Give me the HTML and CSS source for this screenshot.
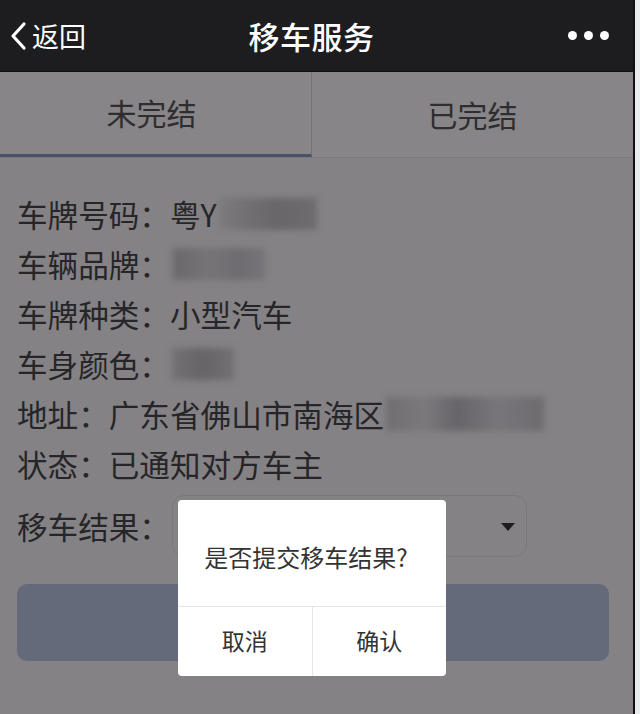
FILE: index.html
```html
<!DOCTYPE html>
<html lang="zh-CN">
<head>
    <meta charset="UTF-8">
    <meta name="viewport" content="width=device-width, initial-scale=1.0">
    <title>移车服务</title>
    <link rel="stylesheet" href="styles.css">
</head>
<body>

    <div class="screen">
        <div class="navbar">
            <div class="nav-back">
                <svg class="chevron" width="18" height="30" viewBox="0 0 18 30">
                    <polyline points="15,3 4,15 15,27" fill="none" stroke="#fff" stroke-width="3.2" stroke-linecap="round" stroke-linejoin="round"/>
                </svg>
                <span>返回</span>
            </div>
            <div class="nav-title">移车服务</div>
            <div class="nav-more">
                <span class="dot"></span>
                <span class="dot"></span>
                <span class="dot"></span>
            </div>
        </div>

        <div class="tabs">
            <div class="tab active">未完结</div>
            <div class="tab">已完结</div>
        </div>

        <div class="info">
            <div class="row">车牌号码：粤Y<span class="blur blur-plate"></span></div>
            <div class="row">车辆品牌：<span class="blur blur-brand"></span></div>
            <div class="row">车牌种类：小型汽车</div>
            <div class="row">车身颜色：<span class="blur blur-color"></span></div>
            <div class="row">地址：广东省佛山市南海区<span class="blur blur-addr"></span></div>
            <div class="row">状态：已通知对方车主</div>
            <div class="row row-select">
                <span>移车结果：</span>
                <div class="select-box">
                    <span class="caret"></span>
                </div>
            </div>
            <div class="submit-btn"></div>
        </div>

        <div class="dialog">
            <div class="dialog-msg">是否提交移车结果?</div>
            <div class="dialog-actions">
                <div class="dialog-btn">取消</div>
                <div class="dialog-btn">确认</div>
            </div>
        </div>
    </div>

</body>
</html>
```

FILE: styles.css
```css
body {
    margin: 0;
    padding: 0;
    background-color: #e9ebee;
    font-family: "Noto Sans CJK SC", "Noto Sans", sans-serif;
}

.screen {
    position: relative;
    width: 633px;
    height: 714px;
    background-color: #848285;
    border-right: 2px solid #101010;
    overflow: hidden;
}

/* top bar */
.navbar {
    height: 71px;
    background-color: #1d1c1e;
    border-bottom: 1px solid #111;
    display: flex;
    align-items: center;
    justify-content: space-between;
    color: #fff;
}

.nav-back {
    width: 140px;
    display: flex;
    align-items: center;
    gap: 5px;
    padding-left: 9px;
    box-sizing: border-box;
    font-size: 27px;
}

.nav-title {
    font-size: 31px;
    font-weight: 500;
    letter-spacing: 0.5px;
}

.nav-more {
    width: 150px;
    display: flex;
    justify-content: flex-end;
    gap: 7px;
    padding-right: 24px;
    box-sizing: border-box;
}

.dot {
    width: 9px;
    height: 9px;
    border-radius: 50%;
    background-color: #fff;
}

/* tabs */
.tabs {
    display: flex;
    height: 85px;
    background-color: #878587;
    border-bottom: 1px solid #7b797c;
}

.tab {
    flex: 1;
    display: flex;
    align-items: center;
    justify-content: center;
    font-size: 30px;
    color: #2e2d2f;
    padding-bottom: 2px;
    box-sizing: border-box;
}

.tab:first-child {
    flex: 0 0 312px;
    padding-right: 8px;
    border-right: 1px solid #747275;
}

.tab.active {
    border-bottom: 3px solid #4a5168;
}

/* details */
.info {
    padding: 31px 24px 0 17px;
    color: #262527;
    font-size: 30.6px;
}

.row {
    height: 50px;
    line-height: 50px;
    display: flex;
    align-items: center;
    white-space: nowrap;
}

.blur {
    display: inline-block;
    filter: blur(3px);
}

.blur-plate {
    width: 98px;
    height: 32px;
    margin-left: 2px;
    background: linear-gradient(90deg, #7d7b7e 0%, #716f72 30%, #686669 60%, #6e6c6f 100%);
}

.blur-brand {
    width: 92px;
    height: 32px;
    margin-left: 3px;
    background: linear-gradient(90deg, #6a686b 0%, #767477 40%, #6e6c70 70%, #767478 100%);
}

.blur-color {
    width: 62px;
    height: 32px;
    margin-left: 2px;
    background: linear-gradient(90deg, #737174 0%, #666467 50%, #727073 100%);
}

.blur-addr {
    width: 158px;
    height: 34px;
    margin-left: 2px;
    background: linear-gradient(90deg, #706e71 0%, #7b797c 25%, #666468 45%, #78767a 70%, #6d6b6e 100%);
}

.row-select {
    height: 64px;
    margin-top: 5px;
}

.select-box {
    position: relative;
    width: 355px;
    height: 62px;
    margin-left: 2px;
    border: 1px solid #79777a;
    border-radius: 12px;
    box-sizing: border-box;
}

.caret {
    position: absolute;
    right: 11px;
    top: 27px;
    width: 0;
    height: 0;
    border-left: 7px solid transparent;
    border-right: 7px solid transparent;
    border-top: 8px solid #1d1c1e;
}

.submit-btn {
    height: 77px;
    margin-top: 26px;
    background-color: #656a7b;
    border-radius: 10px;
}

/* confirm dialog */
.dialog {
    position: absolute;
    left: 178px;
    top: 500px;
    width: 268px;
    background-color: #fff;
    border-radius: 4px;
    overflow: hidden;
    color: #333;
}

.dialog-msg {
    height: 107px;
    display: flex;
    align-items: center;
    justify-content: center;
    font-size: 24px;
    padding: 6px 12px 0 0;
    box-sizing: border-box;
    border-bottom: 1px solid #e6e6e6;
}

.dialog-actions {
    display: flex;
    height: 69px;
}

.dialog-btn {
    flex: 1;
    display: flex;
    align-items: center;
    justify-content: center;
    font-size: 23px;
    padding-bottom: 3px;
    box-sizing: border-box;
}

.dialog-btn:first-child {
    border-right: 1px solid #e6e6e6;
}
```
